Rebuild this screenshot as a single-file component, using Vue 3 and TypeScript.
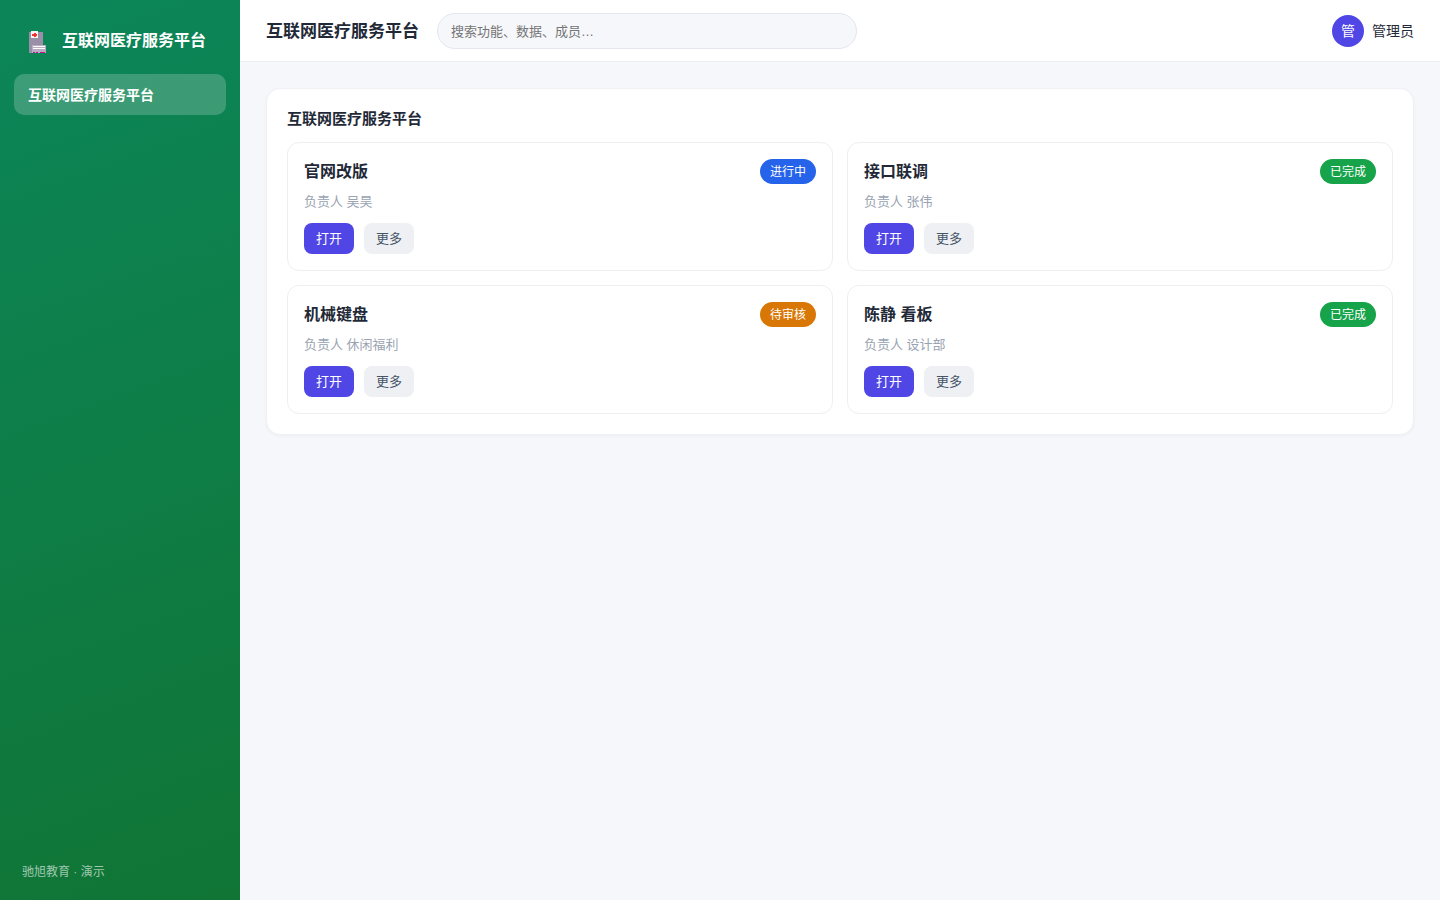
<script setup lang="ts">
import { ref } from 'vue'

type Tone = 'active' | 'done' | 'pending'

interface Project {
  title: string
  owner: string
  status: string
  tone: Tone
}

const platform = '互联网医疗服务平台'
const keyword = ref('')

const projects: Project[] = [
  { title: '官网改版', owner: '吴昊', status: '进行中', tone: 'active' },
  { title: '接口联调', owner: '张伟', status: '已完成', tone: 'done' },
  { title: '机械键盘', owner: '休闲福利', status: '待审核', tone: 'pending' },
  { title: '陈静 看板', owner: '设计部', status: '已完成', tone: 'done' },
]
</script>

<template>
  <div class="shell">
    <aside class="sidebar">
      <div class="brand">
        <svg class="logo" viewBox="0 0 20 26" aria-hidden="true" shape-rendering="crispEdges">
          <rect x="1" y="4" width="14" height="21" fill="#9a8fa6" />
          <rect x="3" y="3" width="7" height="7" fill="#f3f3f6" />
          <rect x="4" y="6" width="5" height="2" fill="#f4322c" />
          <rect x="6" y="5" width="2" height="4" fill="#f4322c" />
          <rect x="4" y="17" width="14" height="8" fill="#b9adc4" />
          <rect x="5" y="18" width="12" height="1" fill="#ffffff" />
          <rect x="5" y="20" width="12" height="1" fill="#ffffff" />
          <rect x="5" y="24" width="2" height="1" fill="#c2188b" />
          <rect x="8" y="24" width="2" height="1" fill="#c2188b" />
          <rect x="12" y="24" width="5" height="1" fill="#c2188b" />
        </svg>
        <span>{{ platform }}</span>
      </div>
      <nav>
        <a class="nav-item" href="#" aria-current="page">{{ platform }}</a>
      </nav>
      <div class="footnote">驰旭教育 · 演示</div>
    </aside>

    <div class="content">
      <header class="topbar">
        <h1>{{ platform }}</h1>
        <input
          v-model="keyword"
          class="search"
          type="text"
          aria-label="搜索"
          placeholder="搜索功能、数据、成员…"
        />
        <div class="user">
          <span class="avatar">管</span>
          <span>管理员</span>
        </div>
      </header>

      <main>
        <section class="panel">
          <h2>{{ platform }}</h2>
          <div class="grid">
            <article v-for="p in projects" :key="p.title" class="card">
              <div class="card-head">
                <h3>{{ p.title }}</h3>
                <span class="badge" :class="p.tone">{{ p.status }}</span>
              </div>
              <p>负责人 {{ p.owner }}</p>
              <div class="actions">
                <button type="button" class="primary">打开</button>
                <button type="button">更多</button>
              </div>
            </article>
          </div>
        </section>
      </main>
    </div>
  </div>
</template>

<style>
body {
  margin: 0;
  background: #f5f7fb;
}
</style>

<style scoped>
.shell,
.shell * {
  box-sizing: border-box;
}

.shell {
  display: flex;
  min-height: 100vh;
  color: #1f2937;
  font: 14px/20px "Liberation Sans", "Noto Sans CJK SC", sans-serif;
}

h1,
h2,
h3,
p {
  margin: 0;
}

.sidebar {
  display: flex;
  flex: 0 0 240px;
  flex-direction: column;
  padding: 20px 14px 18px;
  background: linear-gradient(160deg, #0c8659, #107535);
  color: #fff;
}

.brand {
  display: flex;
  align-items: center;
  gap: 14px;
  height: 42px;
  margin-bottom: 12px;
  padding-left: 14px;
  font-size: 16px;
  font-weight: 700;
}

.logo {
  width: 20px;
  height: 26px;
}

.nav-item {
  display: block;
  padding: 11px 14px 10px;
  border-radius: 10px;
  background: rgba(255, 255, 255, 0.2);
  color: #fff;
  font-weight: 700;
  text-decoration: none;
}

.footnote {
  margin-top: auto;
  padding-left: 8px;
  color: rgba(255, 255, 255, 0.6);
  font-size: 12px;
}

.content {
  flex: 1;
  min-width: 0;
}

.topbar {
  display: flex;
  align-items: center;
  gap: 18px;
  padding: 13px 26px 12px;
  border-bottom: 1px solid #eceef3;
  background: #fff;
}

h1 {
  font-size: 17px;
  line-height: 25px;
  white-space: nowrap;
}

.search {
  flex: 0 1 420px;
  min-width: 0;
  height: 36px;
  padding: 0 13px;
  border: 1px solid #e3e6ee;
  border-radius: 18px;
  outline: none;
  background: #f6f7fb;
  color: inherit;
  font: inherit;
  font-size: 13px;
}

.search::placeholder {
  color: #757575;
}

.user {
  display: flex;
  align-items: center;
  gap: 8px;
  margin-left: auto;
  white-space: nowrap;
}

.avatar {
  display: grid;
  place-items: center;
  width: 32px;
  height: 32px;
  border-radius: 50%;
  background: #4f46e5;
  color: #fff;
}

main {
  padding: 26px;
}

.panel {
  padding: 20px;
  border: 1px solid #f0f1f5;
  border-radius: 14px;
  background: #fff;
  box-shadow: 0 1px 3px rgba(16, 24, 40, 0.04);
}

h2 {
  margin-bottom: 13px;
  font-size: 15px;
  line-height: 20px;
}

.grid {
  display: grid;
  grid-template-columns: repeat(2, minmax(0, 1fr));
  gap: 14px;
}

.card {
  padding: 16px;
  border: 1px solid #eeeff3;
  border-radius: 12px;
}

.card-head {
  display: flex;
  align-items: center;
  justify-content: space-between;
}

h3 {
  font-size: 16px;
  line-height: 25px;
}

.badge {
  padding: 3px 10px 2px;
  border-radius: 13px;
  color: #fff;
  font-size: 12px;
}

.active {
  background: #2563eb;
}

.done {
  background: #16a34a;
}

.pending {
  background: #d97706;
}

.card p {
  margin: 8px 0 11px;
  color: #9aa3b2;
  font-size: 13px;
}

.actions {
  display: flex;
  gap: 10px;
}

button {
  height: 31px;
  padding: 0 12px;
  border: 0;
  border-radius: 8px;
  background: #eef0f4;
  color: #475569;
  font: inherit;
  font-size: 13px;
  cursor: pointer;
}

.primary {
  background: #4f46e5;
  color: #fff;
}
</style>
